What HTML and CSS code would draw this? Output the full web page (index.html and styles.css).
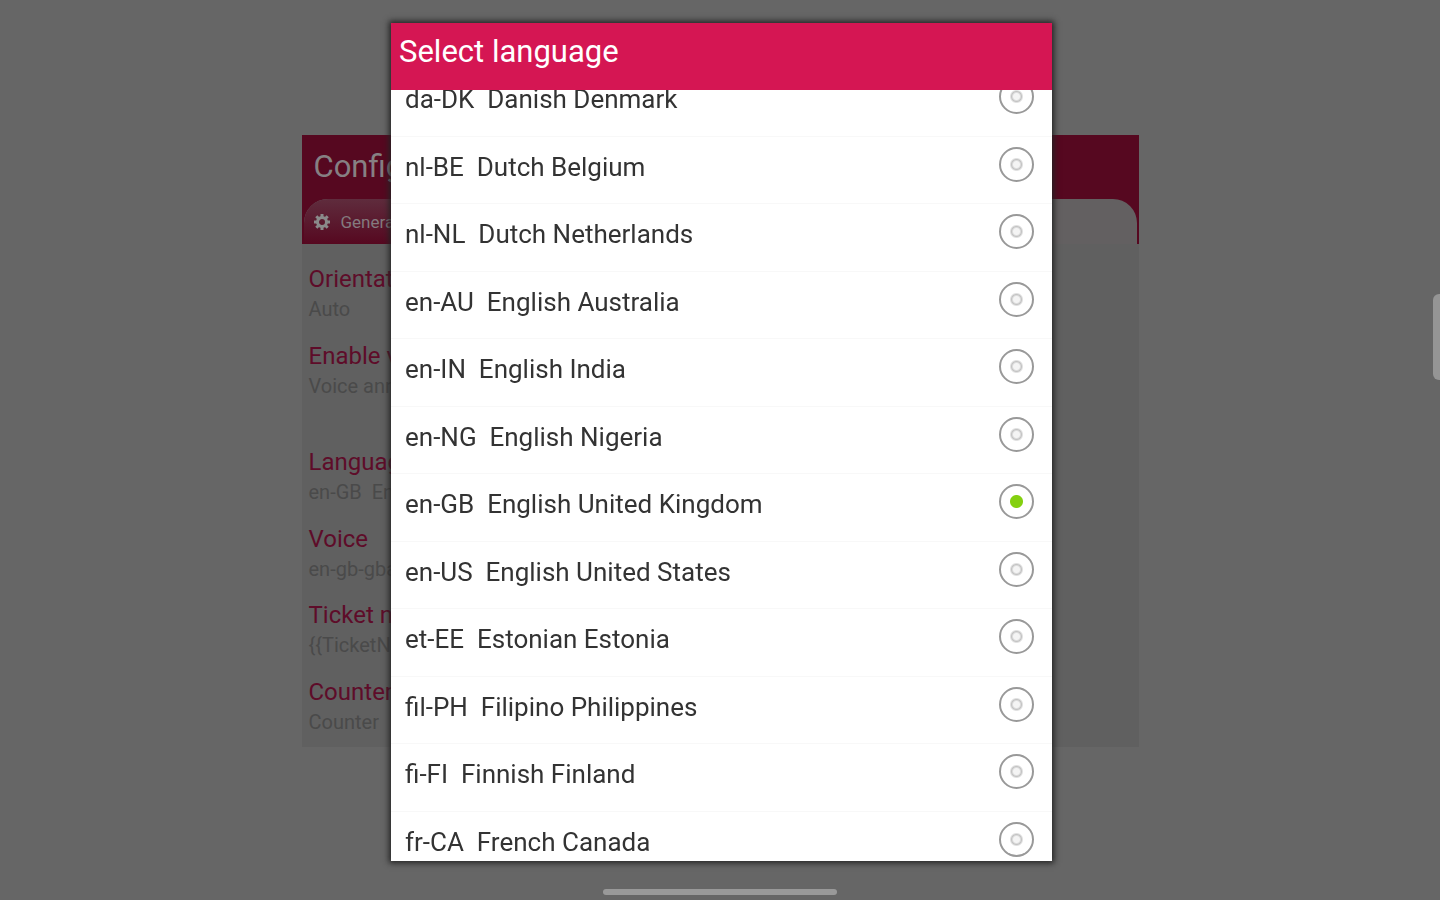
FILE: index.html
```
<!DOCTYPE html>
<html lang="en">

<head>
  <meta charset="UTF-8">
  <meta name="viewport" content="width=device-width, initial-scale=1.0">
  <title>Select language</title>
  <link rel="stylesheet" href="styles.css">
</head>

<body>
  <!-- Settings window behind the dialog -->
  <main class="config">
    <header class="config-header">
      <h1>Configuration</h1>
      <nav class="tabs">
        <a class="tab" href="#general">
          <svg class="gear" viewBox="0 0 16 16" aria-hidden="true">
            <circle cx="8" cy="8" r="4.5" fill="none" stroke="currentColor" stroke-width="3" />
            <path d="M8 0v3M8 13v3M0 8h3M13 8h3M2.3 2.3l2.2 2.2M11.5 11.5l2.2 2.2M2.3 13.7l2.2-2.2M11.5 4.5l2.2-2.2" stroke="currentColor" stroke-width="3" />
          </svg>
          General
        </a>
      </nav>
    </header>
    <section class="settings" id="general">
      <div class="setting">
        <h2>Orientation</h2>
        <p>Auto</p>
      </div>
      <div class="setting setting-last">
        <h2>Enable voice</h2>
        <p>Voice announcement</p>
      </div>
      <div class="setting">
        <h2>Language</h2>
        <p>en-GB&nbsp; English</p>
      </div>
      <div class="setting">
        <h2>Voice</h2>
        <p>en-gb-gba</p>
      </div>
      <div class="setting">
        <h2>Ticket number</h2>
        <p>{{TicketNumber}}</p>
      </div>
      <div class="setting">
        <h2>Counter</h2>
        <p>Counter</p>
      </div>
    </section>
  </main>

  <!-- Language dialog -->
  <div class="overlay">
    <div class="dialog" role="dialog" aria-labelledby="dialog-title">
      <h2 class="dialog-title" id="dialog-title">Select language</h2>
      <div class="dialog-body">
        <ul class="languages">
          <li><label for="da-DK">da-DK&nbsp; Danish Denmark</label><input type="radio" name="language" id="da-DK"></li>
          <li><label for="nl-BE">nl-BE&nbsp; Dutch Belgium</label><input type="radio" name="language" id="nl-BE"></li>
          <li><label for="nl-NL">nl-NL&nbsp; Dutch Netherlands</label><input type="radio" name="language" id="nl-NL"></li>
          <li><label for="en-AU">en-AU&nbsp; English Australia</label><input type="radio" name="language" id="en-AU"></li>
          <li><label for="en-IN">en-IN&nbsp; English India</label><input type="radio" name="language" id="en-IN"></li>
          <li><label for="en-NG">en-NG&nbsp; English Nigeria</label><input type="radio" name="language" id="en-NG"></li>
          <li><label for="en-GB">en-GB&nbsp; English United Kingdom</label><input type="radio" name="language" id="en-GB" checked></li>
          <li><label for="en-US">en-US&nbsp; English United States</label><input type="radio" name="language" id="en-US"></li>
          <li><label for="et-EE">et-EE&nbsp; Estonian Estonia</label><input type="radio" name="language" id="et-EE"></li>
          <li><label for="fil-PH">fil-PH&nbsp; Filipino Philippines</label><input type="radio" name="language" id="fil-PH"></li>
          <li><label for="fi-FI">fi-FI&nbsp; Finnish Finland</label><input type="radio" name="language" id="fi-FI"></li>
          <li><label for="fr-CA">fr-CA&nbsp; French Canada</label><input type="radio" name="language" id="fr-CA"></li>
        </ul>
      </div>
    </div>
  </div>

  <!-- System handles -->
  <div class="edge-handle"></div>
  <div class="home-bar"></div>
</body>

</html>
```

FILE: styles.css
```
* {
  box-sizing: border-box;
}

body {
  margin: 0;
  height: 100vh;
  overflow: hidden;
  padding-top: 15vh;
  background: #666;
  font-family: Roboto, sans-serif;
}

h1,
h2,
p,
ul {
  margin: 0;
  padding: 0;
  font-weight: 400;
}

.config {
  width: 92%;
  max-width: 837px;
  margin: 0 auto;
  background: #606060;
}

.config-header {
  background: #560820;
}

.config-header h1 {
  padding: 0 12px;
  font-size: 31px;
  line-height: 64px;
  color: #868083;
}

.tabs {
  display: flex;
  height: 45px;
  margin: 0 2px;
  border-radius: 24px 24px 0 0;
  overflow: hidden;
  background: #636061;
}

.tab {
  display: flex;
  align-items: center;
  gap: 11px;
  width: 200px;
  padding-left: 10px;
  background: linear-gradient(#5f2c3d, #560820);
  color: #847a7e;
  font-size: 17px;
  text-decoration: none;
}

.gear {
  width: 16px;
  height: 16px;
  color: #8a8a8a;
}

.settings {
  padding: 20px 7px 0;
}

.setting {
  height: 8.5vh;
}

.setting:last-child {
  height: 70px;
}

.setting-last {
  margin-bottom: 30px;
}

.setting h2 {
  font-size: 24px;
  line-height: 30px;
  color: #5e0c29;
}

.setting p {
  font-size: 20px;
  line-height: 30px;
  color: #4a4a4a;
}

.overlay {
  position: fixed;
  inset: 0;
  display: flex;
  justify-content: center;
  align-items: flex-start;
  padding: 23px 0 0 3px;
}

.dialog {
  display: flex;
  flex-direction: column;
  width: 92%;
  max-width: 661px;
  height: calc(100vh - 62px);
  background: #fff;
  box-shadow: 0 0 6px 2px #222;
}

.dialog-title {
  padding: 0 8px;
  font-size: 31px;
  line-height: 58px;
  height: 67px;
  flex: none;
  background: #d51653;
  color: #fff;
}

.dialog-body {
  flex: 1;
  overflow: hidden;
}

/* list is scrolled a little past its first row */
.languages {
  margin-top: -21px;
  list-style: none;
}

.languages li {
  display: flex;
  justify-content: space-between;
  align-items: flex-start;
  height: 7.5vh;
  padding: 10px 18px 0 14px;
  border-bottom: 1px solid #f8f8f8;
}

.languages label {
  padding-top: 5px;
  font-size: 26px;
  line-height: 30px;
  color: #333;
}

.languages input {
  appearance: none;
  width: 35px;
  height: 35px;
  margin: 0;
  border: 2px solid #999;
  border-radius: 50%;
  background: radial-gradient(circle, #f4f4f4 3px, #c4c4c4 5px, #fff 7px);
}

.languages input:checked {
  background: radial-gradient(circle, #84d010 6px, #fff 7px);
}

.edge-handle {
  position: fixed;
  right: 0;
  top: 294px;
  width: 7px;
  height: 86px;
  border-radius: 6px 0 0 6px;
  background: #959595;
}

.home-bar {
  position: fixed;
  left: 50%;
  bottom: 5px;
  width: 234px;
  height: 6px;
  margin-left: -117px;
  border-radius: 3px;
  background: #999;
}
```
